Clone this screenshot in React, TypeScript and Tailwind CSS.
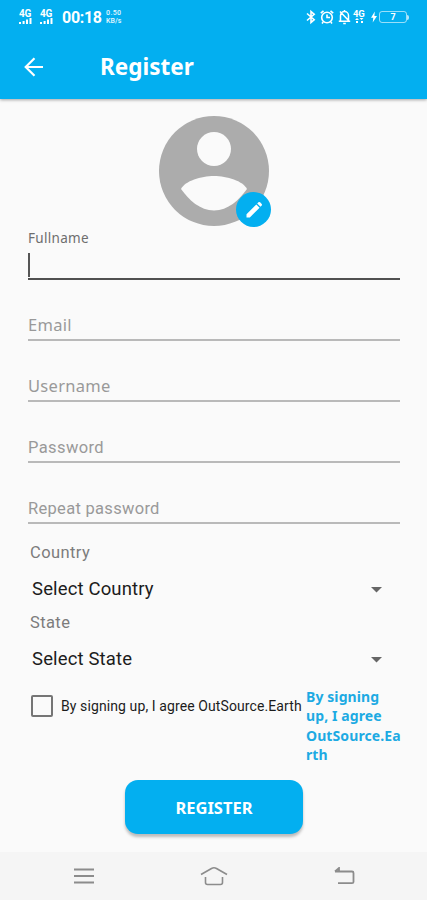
import { type ReactNode } from "react";

const StatusBar = () => (
  <div className="flex h-[34px] items-center justify-between pl-[19px] pr-[18px] font-['Roboto',sans-serif] text-white">
    <div className="flex items-center">
      <Signal />
      <span className="w-[8px]" />
      <Signal />
      <span className="ml-[9px] w-[40px] whitespace-nowrap pt-[2px] text-[16px] font-bold leading-none tracking-[-0.3px]">
        00:18
      </span>
      <span className="ml-[4px] flex flex-col text-[7px] font-medium leading-[8px] tracking-[0.4px] text-white/90">
        <span>0.50</span>
        <span className="tracking-[0.1px]">KB/s</span>
      </span>
    </div>
    <div className="flex items-center">
      <svg width="10" height="16" viewBox="0 0 10 16" fill="none" stroke="white" strokeWidth="1.6">
        <path d="M1 4.5l7.2 6.2L5 13.5v-11l3.2 2.8L1 11.5" />
      </svg>
      <svg className="ml-[4px]" width="14" height="16" viewBox="0 0 14 16" fill="none" stroke="white" strokeWidth="1.6">
        <circle cx="7" cy="8.5" r="5.3" />
        <path d="M7 5.5v3h3M0.8 4.2L3.5 1.8M13.2 4.2L10.5 1.8M3.2 13l-1.2 1.5M10.8 13l1.2 1.5" />
      </svg>
      <svg className="ml-[4px]" width="13" height="16" viewBox="0 0 13 16" fill="none" stroke="white" strokeWidth="1.5">
        <path d="M2.5 12V6.5a4 4 0 0 1 8 0V12M0.8 12.3h11.4M6.5 1v1.5M5.2 14.5h2.6M2 2.5l9 9.5" />
      </svg>
      <span className="ml-[2px] flex w-[13px] flex-col items-start">
        <span className="text-[9.5px] font-bold leading-[8px] tracking-[-0.2px]">4G</span>
        <svg width="12" height="6" viewBox="0 0 12 6" fill="white">
          <path d="M2 2l2-2 2 2zM6.5 0h4L8.5 2zM3 3h2v2H3zM8 3h2v2H8z" />
        </svg>
      </span>
      <svg className="ml-[5px]" width="6" height="12" viewBox="0 0 6 12" fill="white">
        <path d="M3.8 0.5L0 6.8h2.3L1.7 11.5 6 5H3.4z" />
      </svg>
      <span className="ml-[2px] flex items-center">
        <span className="flex h-[12px] w-[28px] items-center justify-center rounded-[3px] border border-white/60 text-[9px] font-bold leading-none">
          7
        </span>
        <span className="h-[5px] w-[2px] rounded-r-sm bg-white/70" />
      </span>
    </div>
  </div>
);

const Signal = () => (
  <span className="flex w-[13px] flex-col items-start">
    <span className="text-[10px] font-bold leading-[8px] tracking-[-0.3px]">4G</span>
    <svg width="13" height="6" viewBox="0 0 13 6" fill="white">
      <path d="M0 4h2v2H0zM3.6 3h2v3h-2zM7 1.5h2V6H7zM10.5 0h2v6h-2z" />
    </svg>
  </span>
);

const Avatar = () => (
  <div className="relative mx-auto h-[110px] w-[110px]">
    <svg width="110" height="110" viewBox="0 0 110 110">
      <circle cx="55" cy="55" r="55" fill="#acacac" />
      <circle cx="55" cy="33" r="17" fill="#fafafa" />
      <path d="M22 73C26 65 42 60 55 60s29 5 33 13C80 84 69 94.500 55 94.500S30 84 22 73z" fill="#fafafa" />
    </svg>
    <span className="absolute -right-[2px] bottom-[-1px] flex h-[35px] w-[35px] items-center justify-center rounded-full bg-[#03aff0]">
      <svg width="18" height="18" viewBox="0 0 18 18" fill="white">
        <path d="M1.5 13.2L11.3 3.4l3.3 3.3-9.8 9.8H1.5zM12.2 2.5l1.2-1.2q.9-.7 1.7 0l1.6 1.6q.7.8 0 1.7l-1.2 1.2z" />
      </svg>
    </span>
  </div>
);

const Field = ({ children }: { children: ReactNode }) => (
  <div className="flex h-[61px] flex-col justify-end border-b-2 border-[#b9b9b9] pb-[3px] text-[#999]">
    {children}
  </div>
);

const Spinner = ({ label }: { label: string }) => (
  <div className="flex h-[38px] items-center justify-between pl-[4px] pr-[18px] text-[18.5px] tracking-[0.15px] text-[#1c1c1c]">
    <span className="pt-[4px]">{label}</span>
    <svg className="mt-[3px]" width="11" height="6" viewBox="0 0 11 6" fill="#666">
      <path d="M0 0h11L5.5 5.5z" />
    </svg>
  </div>
);

export default function App() {
  return (
    <div className="flex h-[900px] w-[427px] flex-col overflow-hidden bg-[#fafafa] font-['Roboto',sans-serif]">
      <header className="h-[99px] shrink-0 bg-[#03aff0] shadow-[0_1px_3px_rgba(0,0,0,0.35)]">
        <StatusBar />
        <div className="flex h-[65px] items-center pl-[24px]">
          <svg width="20" height="20" viewBox="0 0 20 20" fill="none" stroke="white" strokeWidth="2.2">
            <path d="M19 10H2M10.5 1.2L1.7 10l8.8 8.8" />
          </svg>
          <h1 className="ml-[56px] pt-[2px] font-['Noto_Sans',sans-serif] text-[22.5px] font-bold leading-none text-white">
            Register
          </h1>
        </div>
      </header>

      <main className="flex h-[753px] shrink-0 flex-col pl-[28px] pr-[27px] pt-[17px]">
        <Avatar />

        <div className="flex h-[54px] flex-col border-b-2 border-[#505050] pt-[3px]">
          <label className="font-['Noto_Sans',sans-serif] text-[13.5px] leading-[18px] tracking-[0.3px] text-[#6e6e6e]">
            Fullname
          </label>
          <span className="mt-[6px] h-[24px] w-[2px] bg-[#555]" />
        </div>
        <Field>
          <span className="font-['Noto_Sans',sans-serif] text-[16.5px] leading-[22px] tracking-[0.3px]">Email</span>
        </Field>
        <Field>
          <span className="font-['Noto_Sans',sans-serif] text-[16.5px] leading-[22px] tracking-[0.3px]">Username</span>
        </Field>
        <Field>
          <span className="text-[16.5px] leading-[21px] tracking-[0.4px]">Password</span>
        </Field>
        <Field>
          <span className="text-[16.5px] leading-[21px] tracking-[0.3px]">Repeat password</span>
        </Field>

        <div className="mt-[11px] flex flex-col">
          <span className="h-[34px] pl-[2px] pt-[6px] text-[16.5px] leading-[24px] tracking-[0.4px] text-[#7c7c7c]">
            Country
          </span>
          <Spinner label="Select Country" />
          <span className="h-[32px] pl-[2px] pt-[4px] text-[16.5px] leading-[24px] tracking-[0.4px] text-[#7c7c7c]">
            State
          </span>
          <Spinner label="Select State" />
        </div>

        <div className="mt-[11px] flex items-start">
          <span className="ml-[3px] mt-[7px] h-[22px] w-[22px] shrink-0 rounded-[2px] border-2 border-[#757575]" />
          <span className="ml-[8px] mt-[8px] w-[245px] shrink-0 whitespace-nowrap text-[14px] leading-[20px] tracking-[0.1px] text-[#1c1c1c]">
            By signing up, I agree OutSource.Earth
          </span>
          <span className="-mt-px w-[96px] shrink-0 whitespace-nowrap font-['Noto_Sans',sans-serif] text-[14px] font-bold leading-[19.4px] tracking-[0.1px] text-[#1daae3]">
            By signing
            <br />
            up, I agree
            <br />
            OutSource.Ea
            <br />
            rth
          </span>
        </div>

        <button className="ml-[97px] mt-[15px] h-[54px] w-[178px] shrink-0 rounded-[13px] bg-[#03aff0] pt-[3px] font-['Noto_Sans',sans-serif] text-[16.5px] font-bold text-white shadow-[0_3px_3px_rgba(0,0,0,0.25)]">
          REGISTER
        </button>
      </main>

      <nav className="flex h-[48px] shrink-0 items-center justify-between bg-[#f5f5f5] pl-[74px] pr-[72px]">
        <svg width="20" height="16" viewBox="0 0 20 16" stroke="#8c8c8c" strokeWidth="1.8">
          <path d="M0 1.5h20M0 8h20M0 14.5h20" />
        </svg>
        <svg width="28" height="20" viewBox="0 0 28 20" fill="none" stroke="#8c8c8c" strokeWidth="1.6">
          <path d="M1 8.5L11.5 2.5q2.5-1.5 5 0L27 8.5M5.5 11v5.5q0 2 2 2h13q2 0 2-2V11" />
        </svg>
        <svg width="21" height="18" viewBox="0 0 21 18" fill="none" stroke="#8c8c8c" strokeWidth="1.8">
          <path d="M1 4.5h17q1.5 0 1.5 1.5v9q0 1.2-1.5 1.2H4M1 4.5L5 1v3" />
        </svg>
      </nav>
    </div>
  );
}
